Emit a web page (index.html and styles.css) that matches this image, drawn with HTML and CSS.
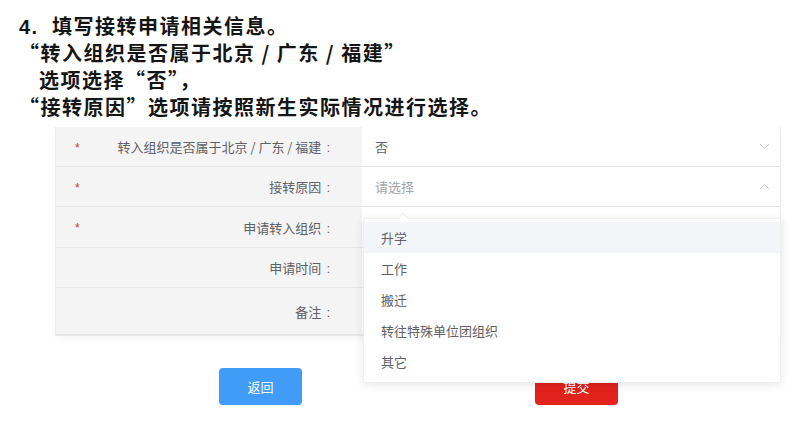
FILE: index.html
```html
<!DOCTYPE html>
<html lang="zh-CN">
<head>
<meta charset="utf-8">
<title>填写接转申请相关信息</title>
<link rel="stylesheet" href="styles.css">
</head>
<body>
<div class="intro">
  <div class="line line-1"><span class="num">4.</span>填写接转申请相关信息。</div>
  <div class="line line-2">“转入组织是否属于北京 / 广东 / 福建”</div>
  <div class="line line-3">选项选择“否”，</div>
  <div class="line line-4">“接转原因”选项请按照新生实际情况进行选择。</div>
</div>

<div class="form">
  <div class="row r1">
    <div class="label"><span class="req">*</span><span class="ltext">转入组织是否属于北京 / 广东 / 福建<span class="colon">:</span></span></div>
    <div class="value">
      <span class="val">否</span>
      <svg class="chev" width="11" height="7" viewBox="0 0 11 7"><polyline points="1,1 5.5,5.5 10,1" fill="none" stroke="#c8cbd1" stroke-width="1"/></svg>
    </div>
  </div>
  <div class="row r2">
    <div class="label"><span class="req">*</span><span class="ltext">接转原因<span class="colon">:</span></span></div>
    <div class="value">
      <span class="placeholder">请选择</span>
      <svg class="chev" width="11" height="7" viewBox="0 0 11 7"><polyline points="1,6 5.5,1.5 10,6" fill="none" stroke="#c8cbd1" stroke-width="1"/></svg>
    </div>
  </div>
  <div class="row r3">
    <div class="label"><span class="req">*</span><span class="ltext">申请转入组织<span class="colon">:</span></span></div>
    <div class="value"></div>
  </div>
  <div class="row r4">
    <div class="label"><span class="ltext">申请时间<span class="colon">:</span></span></div>
    <div class="value"></div>
  </div>
  <div class="row r5">
    <div class="label"><span class="ltext">备注<span class="colon">:</span></span></div>
    <div class="value"></div>
  </div>

  <div class="dropdown">
    <div class="arrow"></div>
    <ul class="options">
      <li class="opt hover">升学</li>
      <li class="opt">工作</li>
      <li class="opt">搬迁</li>
      <li class="opt">转往特殊单位团组织</li>
      <li class="opt">其它</li>
    </ul>
  </div>
</div>

<div class="actions">
  <button class="btn btn-back">返回</button>
  <button class="btn btn-submit">提交</button>
</div>
</body>
</html>
```

FILE: styles.css
```css
* { box-sizing: border-box; }
html, body { margin: 0; padding: 0; background: #ffffff; }
body {
  font-family: "Noto Sans CJK SC", sans-serif;
  color: #111;
}
.intro {
  padding-top: 12px;
  font-size: 20px;
  font-weight: 700;
  letter-spacing: 1.5px;
  color: #151515;
}
.line { line-height: 27px; height: 27px; white-space: nowrap; padding-left: 19px; }
.line-1 .num {
  display: inline-block;
  width: 33px;
  font-family: "Liberation Sans", sans-serif;
}
.line-3 { padding-left: 39px; }

.form {
  position: relative;
  margin: 7px 0 0 55px;
  width: 726px;
  border-left: 1px solid #ececec;
  border-right: 1px solid #ececec;
  border-bottom: 1px solid #e8e8e8;
  box-shadow: 0 3px 6px rgba(0,0,0,0.04);
}
.row {
  display: flex;
  border-bottom: 1px solid #e6e6e6;
}
.row:last-of-type { border-bottom: none; }
.r1 { height: 40px; }
.r2 { height: 40px; }
.r3 { height: 41px; }
.r4 { height: 40px; }
.r5 { height: 47px; }
.label {
  width: 306px;
  background: #f4f4f5;
  display: flex;
  align-items: center;
  position: relative;
  padding-right: 32px;
  justify-content: flex-end;
  font-size: 13px;
  color: #5f6166;
}
.colon {
  font-family: "Liberation Sans", sans-serif;
  margin-left: 5px;
}
.req {
  position: absolute;
  left: 19px;
  top: 50%;
  transform: translateY(-42%);
  color: #c8354d;
  font-size: 12px;
  font-family: "Liberation Sans", sans-serif;
}
.ltext { white-space: nowrap; }
.value {
  flex: 1;
  display: flex;
  align-items: center;
  justify-content: space-between;
  padding: 0 10px 0 13px;
  font-size: 13px;
  background: #fff;
}
.val { color: #5f6166; }
.placeholder { color: #a3a5aa; }
.chev { display: block; }

.dropdown {
  position: absolute;
  left: 307px;
  top: 91px;
  width: 418px;
  background: #fff;
  border: 1px solid #eeeeee;
  border-radius: 3px;
  box-shadow: 0 2px 10px rgba(0,0,0,0.10);
  z-index: 5;
}
.arrow {
  position: absolute;
  top: -6px;
  left: 33px;
  width: 0; height: 0;
  border-left: 6px solid transparent;
  border-right: 6px solid transparent;
  border-bottom: 6px solid #e6e6e6;
}
.arrow::after {
  content: "";
  position: absolute;
  left: -5px;
  top: 1px;
  border-left: 5px solid transparent;
  border-right: 5px solid transparent;
  border-bottom: 5px solid #fff;
}
.options { list-style: none; margin: 0; padding: 3px 0 5px; }
.opt {
  height: 31px;
  line-height: 31px;
  padding-left: 17px;
  font-size: 13px;
  color: #5f6166;
}
.opt.hover { background: #f4f5f8; }

.actions {
  display: flex;
  gap: 233px;
  margin: 32px 0 0 219px;
}
.btn {
  width: 83px;
  height: 37px;
  border: none;
  border-radius: 4px;
  color: #fff;
  font-size: 13px;
  font-family: "Noto Sans CJK SC", sans-serif;
  padding: 0;
}
.btn-back { background: #409cf7; }
.btn-submit { background: #e1221d; }
```
